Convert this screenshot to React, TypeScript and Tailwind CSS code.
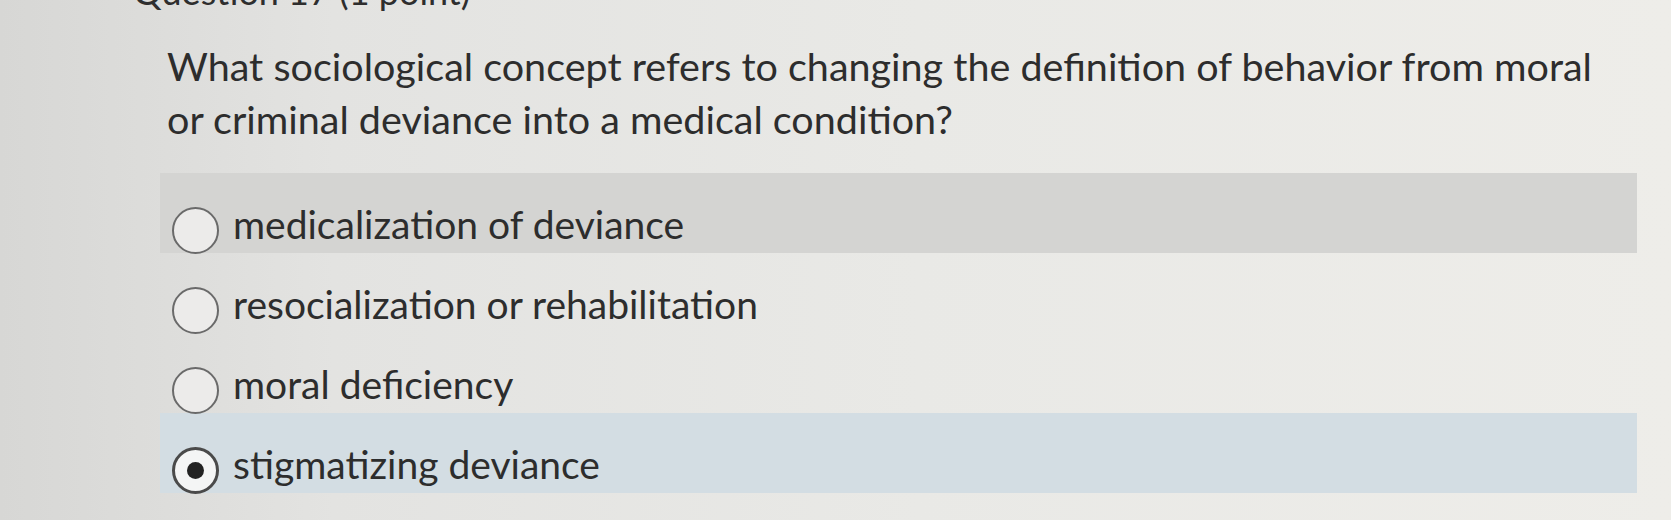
import React from 'react';

type Option = {
  label: string;
  band?: 'gray' | 'blue';
  selected?: boolean;
};

const options: Option[] = [
  { label: 'medicalization of deviance', band: 'gray' },
  { label: 'resocialization or rehabilitation' },
  { label: 'moral deficiency' },
  { label: 'stigmatizing deviance', band: 'blue', selected: true },
];

const Radio: React.FC<{ selected?: boolean }> = ({ selected }) => {
  if (selected) {
    return (
      <span className="flex h-[47px] w-[47px] shrink-0 items-center justify-center rounded-full border-[3px] border-[#4a4a4a] bg-[#f4f5f5]">
        <span className="h-[17px] w-[17px] rounded-full bg-[#222]" />
      </span>
    );
  }
  return (
    <span className="h-[47px] w-[47px] shrink-0 rounded-full border-2 border-[#6a6a6a] bg-[#ecebea]" />
  );
};

export default function App() {
  return (
    <div className="h-[520px] w-[1671px] overflow-hidden bg-[linear-gradient(90deg,#d7d7d5_0%,#e3e3e1_20%,#e9e9e6_55%,#eeede9_100%)] text-[#2d2d2d] font-['Lato','Liberation_Sans',sans-serif]">
      <div className="pl-[133px] -mt-[31px] text-[36px] leading-[44px] text-[#2e2e2e]">
        Question 17 (1 point)
      </div>

      <p className="ml-[167px] mt-[26px] w-[1430px] text-[39.5px] leading-[53px]">
        What sociological concept refers to changing the definition of behavior from moral or criminal deviance into a medical condition?
      </p>

      <div className="ml-[160px] mt-[28px] w-[1477px]">
        {options.map((opt) => (
          <div
            key={opt.label}
            className={`flex h-[80px] items-center gap-[14px] pl-[12px] pt-[34px] ${
              opt.band === 'gray'
                ? 'bg-[#d4d4d2]'
                : opt.band === 'blue'
                ? 'bg-[#d3dde3]'
                : ''
            }`}
          >
            <Radio selected={opt.selected} />
            <span className="mb-[12px] text-[39px] leading-[46px]">{opt.label}</span>
          </div>
        ))}
      </div>
    </div>
  );
}
